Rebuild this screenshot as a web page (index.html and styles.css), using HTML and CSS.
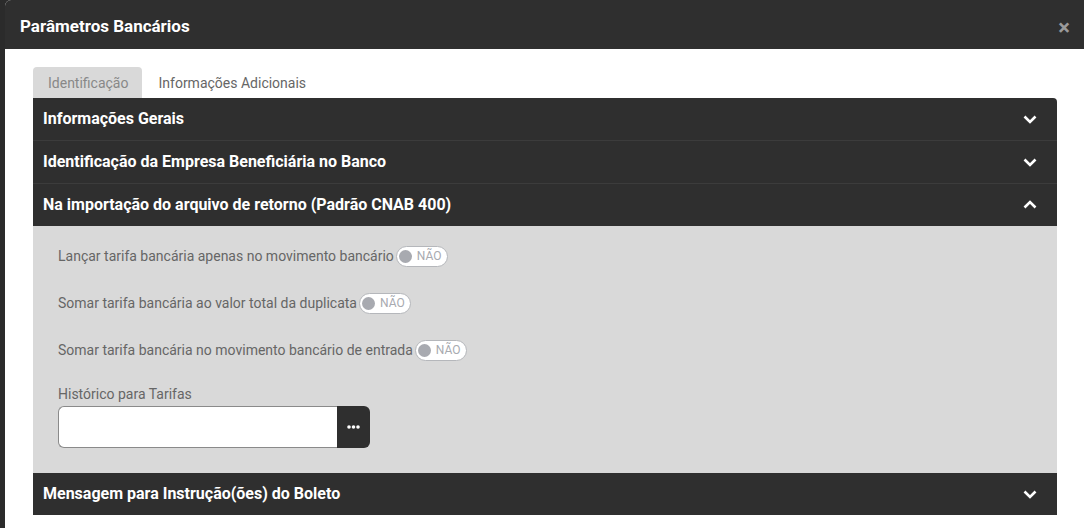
FILE: index.html
```html
<!DOCTYPE html>
<html lang="pt-BR">
<head>
<meta charset="utf-8">
<title>Parâmetros Bancários</title>
<link rel="stylesheet" href="styles.css">
</head>
<body>
<div class="backdrop">
  <div class="modal">
    <div class="modal-header">
      <h1 class="modal-title">Parâmetros Bancários</h1>
      <span class="close">×</span>
    </div>
    <div class="modal-body">
      <div class="tabs">
        <div class="tab active">Identificação</div>
        <div class="tab">Informações Adicionais</div>
      </div>
      <div class="accordion">
        <div class="acc-head first">
          <span>Informações Gerais</span>
          <svg class="chev" width="14" height="10" viewBox="0 0 14 10"><path d="M1.5 2.5 L7 8 L12.5 2.5" fill="none" stroke="#fff" stroke-width="2.6"/></svg>
        </div>
        <div class="acc-head">
          <span>Identificação da Empresa Beneficiária no Banco</span>
          <svg class="chev" width="14" height="10" viewBox="0 0 14 10"><path d="M1.5 2.5 L7 8 L12.5 2.5" fill="none" stroke="#fff" stroke-width="2.6"/></svg>
        </div>
        <div class="acc-head">
          <span>Na importação do arquivo de retorno (Padrão CNAB 400)</span>
          <svg class="chev" width="14" height="10" viewBox="0 0 14 10"><path d="M1.5 7.5 L7 2 L12.5 7.5" fill="none" stroke="#fff" stroke-width="2.6"/></svg>
        </div>
        <div class="acc-body">
          <div class="toggle-row">
            <span>Lançar tarifa bancária apenas no movimento bancário</span>
            <span class="toggle"><span class="knob"></span>NÃO</span>
          </div>
          <div class="toggle-row">
            <span>Somar tarifa bancária ao valor total da duplicata</span>
            <span class="toggle"><span class="knob"></span>NÃO</span>
          </div>
          <div class="toggle-row">
            <span>Somar tarifa bancária no movimento bancário de entrada</span>
            <span class="toggle"><span class="knob"></span>NÃO</span>
          </div>
          <div class="field">
            <label class="field-label">Histórico para Tarifas</label>
            <div class="input-group">
              <input class="input" type="text">
              <button class="btn-more" type="button">
                <svg width="13" height="4" viewBox="0 0 13 4"><circle cx="2" cy="2" r="1.8" fill="#fff"/><circle cx="6.5" cy="2" r="1.8" fill="#fff"/><circle cx="11" cy="2" r="1.8" fill="#fff"/></svg>
              </button>
            </div>
          </div>
        </div>
        <div class="acc-head last">
          <span>Mensagem para Instrução(ões) do Boleto</span>
          <svg class="chev" width="14" height="10" viewBox="0 0 14 10"><path d="M1.5 2.5 L7 8 L12.5 2.5" fill="none" stroke="#fff" stroke-width="2.6"/></svg>
        </div>
      </div>
    </div>
  </div>
</div>
</body>
</html>
```

FILE: styles.css
```css
* { box-sizing: border-box; }
html, body { margin: 0; padding: 0; }
body {
  font-family: Roboto, "Liberation Sans", sans-serif;
  background: #2b2b2b;
  width: 1084px;
  height: 528px;
  overflow: hidden;
}
.backdrop {
  padding-left: 5px;
  height: 528px;
}
.modal {
  background: #fff;
  height: 528px;
  border-top-left-radius: 6px;
  overflow: hidden;
}
.modal-header {
  background: #2f2f2f;
  height: 49px;
  display: flex;
  align-items: center;
  justify-content: space-between;
  padding: 2px 14px 0 15px;
}
.modal-title {
  margin: 0;
  color: #fff;
  font-size: 17px;
  font-weight: 700;
}
.close {
  color: #9a9a9a;
  font-size: 22px;
  font-weight: 700;
  line-height: 1;
  margin-top: 4px;
}
.modal-body {
  padding: 18px 27px 0 28px;
}
.tabs {
  display: flex;
  gap: 2px;
  height: 31px;
}
.tab {
  padding: 0 14px;
  line-height: 32px;
  font-size: 14px;
  color: #666;
  border-radius: 4px 4px 0 0;
}
.tab.active {
  background: #d9d9d9;
  color: #888;
  padding: 0 14px 0 15px;
}
.accordion {
  background: #2f2f2f;
  border-radius: 0 4px 0 0;
  overflow: hidden;
}
.acc-head {
  height: 43px;
  display: flex;
  align-items: center;
  justify-content: space-between;
  padding: 0 20px 1px 10px;
  color: #fff;
  font-size: 16px;
  font-weight: 700;
  border-top: 1px solid #3c3c3c;
}
.acc-head.first {
  border-top: none;
  border-top-left-radius: 6px;
  height: 42px;
}
.acc-head.last { height: 42px; border-top: none; }
.chev { display: block; }
.acc-body {
  background: #d9d9d9;
  padding: 18px 25px 25px;
}
.toggle-row {
  display: flex;
  align-items: center;
  height: 22px;
  margin-bottom: 25px;
  color: #666;
  font-size: 14px;
}
.toggle-row:first-child { margin-top: 1px; }
.toggle {
  display: inline-flex;
  align-items: center;
  height: 21px;
  margin-left: 2px;
  padding: 0 5px 0 2px;
  background: #fff;
  border: 1px solid #b5b7bb;
  border-radius: 11px;
  color: #a8aab0;
  font-size: 12px;
}
.knob {
  width: 13px;
  height: 13px;
  border-radius: 50%;
  background: #a8aab0;
  margin-right: 5px;
}
.field { margin-top: 11px; }
.field-label {
  display: block;
  color: #666;
  font-size: 14px;
  margin-bottom: 4px;
}
.input-group {
  display: flex;
  width: 312px;
  height: 42px;
}
.input {
  flex: 1;
  border: 1px solid #8a8a8a;
  border-right: none;
  border-radius: 6px 0 0 6px;
  background: #fff;
  outline: none;
  font: inherit;
}
.btn-more {
  width: 33px;
  border: none;
  background: #2f2f2f;
  border-radius: 0 6px 6px 0;
  display: flex;
  align-items: center;
  justify-content: center;
  padding: 0;
}
```
